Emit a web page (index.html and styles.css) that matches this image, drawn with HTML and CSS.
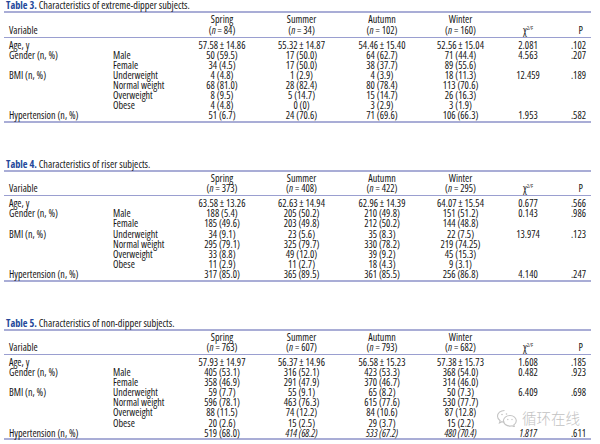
FILE: index.html
```html
<!DOCTYPE html>
<html lang="en">
<head>
<meta charset="utf-8">
<title>Characteristics tables</title>
<link rel="stylesheet" href="styles.css">
</head>
<body>
<main class="page">
  <section class="block">
    <p class="caption"><span class="label">Table 3.</span> Characteristics of extreme-dipper subjects.</p>
    <table class="data">
      <colgroup><col class="c-var"><col class="c-sub"><col class="c-sp"><col class="c-su"><col class="c-au"><col class="c-wi"><col class="c-x"><col class="c-p"></colgroup>
      <thead>
        <tr><th class="var" colspan="2">Variable</th><th>Spring<br>(<i>n</i> = 84)</th><th>Summer<br>(<i>n</i> = 34)</th><th>Autumn<br>(<i>n</i> = 102)</th><th>Winter<br>(<i>n</i> = 160)</th><th>χ<sup>2/F</sup></th><th class="p">P</th></tr>
      </thead>
      <tbody>
        <tr><td class="var">Age, y</td><td></td><td>57.58 ± 14.86</td><td>55.32 ± 14.87</td><td>54.46 ± 15.40</td><td>52.56 ± 15.04</td><td>2.081</td><td class="p">.102</td></tr>
        <tr><td class="var">Gender (n, %)</td><td class="sub">Male</td><td>50 (59.5)</td><td>17 (50.0)</td><td>64 (62.7)</td><td>71 (44.4)</td><td>4.563</td><td class="p">.207</td></tr>
        <tr><td class="var"></td><td class="sub">Female</td><td>34 (4.5)</td><td>17 (50.0)</td><td>38 (37.7)</td><td>89 (55.6)</td><td></td><td class="p"></td></tr>
        <tr><td class="var">BMI (n, %)</td><td class="sub">Underweight</td><td>4 (4.8)</td><td>1 (2.9)</td><td>4 (3.9)</td><td>18 (11.3)</td><td>12.459</td><td class="p">.189</td></tr>
        <tr><td class="var"></td><td class="sub">Normal weight</td><td>68 (81.0)</td><td>28 (82.4)</td><td>80 (78.4)</td><td>113 (70.6)</td><td></td><td class="p"></td></tr>
        <tr><td class="var"></td><td class="sub">Overweight</td><td>8 (9.5)</td><td>5 (14.7)</td><td>15 (14.7)</td><td>26 (16.3)</td><td></td><td class="p"></td></tr>
        <tr><td class="var"></td><td class="sub">Obese</td><td>4 (4.8)</td><td>0 (0)</td><td>3 (2.9)</td><td>3 (1.9)</td><td></td><td class="p"></td></tr>
        <tr><td class="var">Hypertension (n, %)</td><td></td><td>51 (6.7)</td><td>24 (70.6)</td><td>71 (69.6)</td><td>106 (66.3)</td><td>1.953</td><td class="p">.582</td></tr>
      </tbody>
    </table>
  </section>

  <section class="block">
    <p class="caption"><span class="label">Table 4.</span> Characteristics of riser subjects.</p>
    <table class="data">
      <colgroup><col class="c-var"><col class="c-sub"><col class="c-sp"><col class="c-su"><col class="c-au"><col class="c-wi"><col class="c-x"><col class="c-p"></colgroup>
      <thead>
        <tr><th class="var" colspan="2">Variable</th><th>Spring<br>(<i>n</i> = 373)</th><th>Summer<br>(<i>n</i> = 408)</th><th>Autumn<br>(<i>n</i> = 422)</th><th>Winter<br>(<i>n</i> = 295)</th><th>χ<sup>2/F</sup></th><th class="p">P</th></tr>
      </thead>
      <tbody>
        <tr><td class="var">Age, y</td><td></td><td>63.58 ± 13.26</td><td>62.63 ± 14.94</td><td>62.96 ± 14.39</td><td>64.07 ± 15.54</td><td>0.677</td><td class="p">.566</td></tr>
        <tr><td class="var">Gender (n, %)</td><td class="sub">Male</td><td>188 (5.4)</td><td>205 (50.2)</td><td>210 (49.8)</td><td>151 (51.2)</td><td>0.143</td><td class="p">.986</td></tr>
        <tr><td class="var"></td><td class="sub">Female</td><td>185 (49.6)</td><td>203 (49.8)</td><td>212 (50.2)</td><td>144 (48.8)</td><td></td><td class="p"></td></tr>
        <tr><td class="var">BMI (n, %)</td><td class="sub">Underweight</td><td>34 (9.1)</td><td>23 (5.6)</td><td>35 (8.3)</td><td>22 (7.5)</td><td>13.974</td><td class="p">.123</td></tr>
        <tr><td class="var"></td><td class="sub">Normal weight</td><td>295 (79.1)</td><td>325 (79.7)</td><td>330 (78.2)</td><td>219 (74.25)</td><td></td><td class="p"></td></tr>
        <tr><td class="var"></td><td class="sub">Overweight</td><td>33 (8.8)</td><td>49 (12.0)</td><td>39 (9.2)</td><td>45 (15.3)</td><td></td><td class="p"></td></tr>
        <tr><td class="var"></td><td class="sub">Obese</td><td>11 (2.9)</td><td>11 (2.7)</td><td>18 (4.3)</td><td>9 (3.1)</td><td></td><td class="p"></td></tr>
        <tr><td class="var">Hypertension (n, %)</td><td></td><td>317 (85.0)</td><td>365 (89.5)</td><td>361 (85.5)</td><td>256 (86.8)</td><td>4.140</td><td class="p">.247</td></tr>
      </tbody>
    </table>
  </section>

  <section class="block">
    <p class="caption"><span class="label">Table 5.</span> Characteristics of non-dipper subjects.</p>
    <table class="data">
      <colgroup><col class="c-var"><col class="c-sub"><col class="c-sp"><col class="c-su"><col class="c-au"><col class="c-wi"><col class="c-x"><col class="c-p"></colgroup>
      <thead>
        <tr><th class="var" colspan="2">Variable</th><th>Spring<br>(<i>n</i> = 763)</th><th>Summer<br>(<i>n</i> = 607)</th><th>Autumn<br>(<i>n</i> = 793)</th><th>Winter<br>(<i>n</i> = 682)</th><th>χ<sup>2/F</sup></th><th class="p">P</th></tr>
      </thead>
      <tbody>
        <tr><td class="var">Age, y</td><td></td><td>57.93 ± 14.97</td><td>56.37 ± 14.96</td><td>56.58 ± 15.23</td><td>57.38 ± 15.73</td><td>1.608</td><td class="p">.185</td></tr>
        <tr><td class="var">Gender (n, %)</td><td class="sub">Male</td><td>405 (53.1)</td><td>316 (52.1)</td><td>423 (53.3)</td><td>368 (54.0)</td><td>0.482</td><td class="p">.923</td></tr>
        <tr><td class="var"></td><td class="sub">Female</td><td>358 (46.9)</td><td>291 (47.9)</td><td>370 (46.7)</td><td>314 (46.0)</td><td></td><td class="p"></td></tr>
        <tr><td class="var">BMI (n, %)</td><td class="sub">Underweight</td><td>59 (7.7)</td><td>55 (9.1)</td><td>65 (8.2)</td><td>50 (7.3)</td><td>6.409</td><td class="p">.698</td></tr>
        <tr><td class="var"></td><td class="sub">Normal weight</td><td>596 (78.1)</td><td>463 (76.3)</td><td>615 (77.6)</td><td>530 (77.7)</td><td></td><td class="p"></td></tr>
        <tr><td class="var"></td><td class="sub">Overweight</td><td>88 (11.5)</td><td>74 (12.2)</td><td>84 (10.6)</td><td>87 (12.8)</td><td></td><td class="p"></td></tr>
        <tr><td class="var"></td><td class="sub">Obese</td><td>20 (2.6)</td><td>15 (2.5)</td><td>29 (3.7)</td><td>15 (2.2)</td><td></td><td class="p"></td></tr>
        <tr><td class="var">Hypertension (n, %)</td><td></td><td>519 (68.0)</td><td class="it">414 (68.2)</td><td class="it">533 (67.2)</td><td class="it">480 (70.4)</td><td class="it">1.817</td><td class="p">.611</td></tr>
      </tbody>
    </table>
  </section>

  <div class="watermark">
    <svg class="wm-icon" viewBox="0 0 22 18" width="22" height="18" aria-hidden="true">
      <path d="M8.5 1.5c-4 0-7 2.6-7 5.8 0 1.8 1 3.4 2.6 4.5l-.7 2.2 2.6-1.3c.8.2 1.6.4 2.5.4" fill="none" stroke="#c4c4c4" stroke-width="1.1"/>
      <path d="M14 6.5c-3.7 0-6.6 2.4-6.6 5.3s2.9 5.3 6.6 5.3c.8 0 1.5-.1 2.2-.3l2.2 1.1-.6-1.9c1.5-1 2.5-2.5 2.5-4.2 0-2.9-2.7-5.3-6.3-5.3z" fill="none" stroke="#c4c4c4" stroke-width="1.1"/>
      <circle cx="6" cy="5.5" r=".8" fill="#c4c4c4"/><circle cx="10.5" cy="5" r=".8" fill="#c4c4c4"/>
      <circle cx="11.8" cy="10.5" r=".7" fill="#c4c4c4"/><circle cx="16" cy="10.5" r=".7" fill="#c4c4c4"/>
    </svg>
    <span class="wm-text">循环在线</span>
  </div>
</main>
</body>
</html>
```

FILE: styles.css
```css
html, body {
  margin: 0;
  padding: 0;
  background: #ffffff;
}

.page {
  position: relative;
  width: 600px;
  height: 444px;
  padding: 0 0 0 4px;
  box-sizing: border-box;
  font-family: "Open Sans", "Liberation Sans", sans-serif;
  font-stretch: 80%;
  font-size: 10.1px;
  color: #151515;
}

.block + .block {
  margin-top: 36px;
}

.caption {
  margin: 0;
  padding-left: 2px;
  line-height: 11px;
  font-size: 10.3px;
  color: #151515;
}

.caption .label {
  color: #24489a;
  font-weight: bold;
}

.data {
  width: 587px;
  table-layout: fixed;
  border-collapse: collapse;
  border-spacing: 0;
}

.c-var { width: 105px; }
.c-sub { width: 72px; }
.c-sp { width: 82px; }
.c-su { width: 77px; }
.c-au { width: 84px; }
.c-wi { width: 73px; }
.c-x { width: 62px; }
.c-p { width: 32px; }

.data th {
  font-weight: normal;
  text-align: center;
  vertical-align: bottom;
  line-height: 10.5px;
  padding: 1px 0 1.5px 0;
  border-top: 2px solid #a9add6;
  border-bottom: 1px solid #9a9fd0;
  white-space: nowrap;
}

.data th.var {
  text-align: left;
  padding-left: 5px;
}

.data th.p,
.data td.p {
  text-align: right;
  padding-right: 5px;
}

.data th.p {
  padding-right: 8px;
}

.data sup {
  font-size: 5.5px;
  vertical-align: 4px;
  line-height: 0;
}

.data td {
  text-align: center;
  line-height: 10.1px;
  padding: 0;
  white-space: nowrap;
}

.data tbody tr:first-child td {
  padding-top: 2px;
}

.data tbody tr:last-child td {
  border-bottom: 2px solid #a9add6;
  padding-bottom: 0.5px;
}

.data td.var {
  text-align: left;
  padding-left: 5px;
}

.data td.sub {
  text-align: left;
  padding-left: 4px;
}

.data td.it {
  font-style: italic;
}

.watermark {
  position: absolute;
  left: 496px;
  top: 409px;
  display: flex;
  align-items: center;
  gap: 4px;
}

.wm-text {
  font-family: "Noto Sans CJK SC", sans-serif;
  font-weight: 300;
  font-size: 14.5px;
  line-height: 16px;
  color: #c2c2c2;
}
```
